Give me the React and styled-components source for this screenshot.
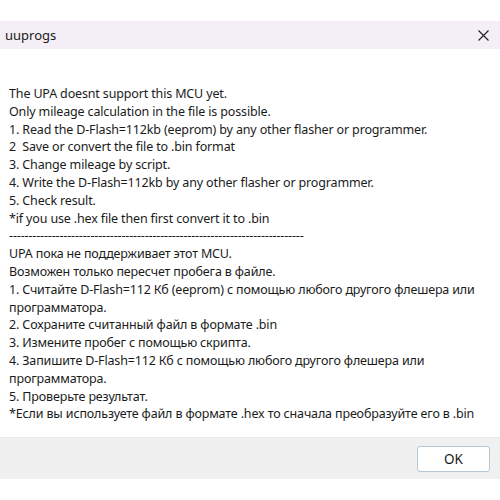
import React from 'react';
import styled, { createGlobalStyle } from 'styled-components';

const GlobalStyle = createGlobalStyle`
  html, body {
    margin: 0;
    padding: 0;
    background: #ffffff;
  }
  body {
    font-family: "Noto Sans", "Open Sans", sans-serif;
    color: #1b1b1b;
  }
`

const englishLines = [
  'The UPA doesnt support this MCU yet.',
  'Only mileage calculation in the file is possible.',
  '1. Read the D-Flash=112kb (eeprom) by any other flasher or programmer.',
  '2  Save or convert the file to .bin format',
  '3. Change mileage by script.',
  '4. Write the D-Flash=112kb by any other flasher or programmer.',
  '5. Check result.',
  '*if you use .hex file then first convert it to .bin',
]

const russianLines = [
  'UPA пока не поддерживает этот MCU.',
  'Возможен только пересчет пробега в файле.',
  '1. Считайте D-Flash=112 Кб (eeprom) с помощью любого другого флешера или',
  'программатора.',
  '2. Сохраните считанный файл в формате .bin',
  '3. Измените пробег с помощью скрипта.',
  '4. Запишите D-Flash=112 Кб с помощью любого другого флешера или',
  'программатора.',
  '5. Проверьте результат.',
  '*Если вы используете файл в формате .hex то сначала преобразуйте его в .bin',
]

const App = () => {
  return (
    <>
      <GlobalStyle />
      <Screen>
        <Dialog>
          <TitleBar>
            <Title>uuprogs</Title>
            <CloseButton aria-label="Close">
              <svg width="11" height="11" viewBox="0 0 11 11">
                <path d="M0.5 0.5 L10.5 10.5 M10.5 0.5 L0.5 10.5" stroke="#1f1f1f" strokeWidth="1.1" fill="none" />
              </svg>
            </CloseButton>
          </TitleBar>
          <Body>
            {englishLines.map((text, index) => <Line key={'en' + index}>{text}</Line>)}
            <Line>{'-'.repeat(76)}</Line>
            {russianLines.map((text, index) => <Line key={'ru' + index}>{text}</Line>)}
          </Body>
          <Footer>
            <OkButton>OK</OkButton>
          </Footer>
        </Dialog>
      </Screen>
    </>
  );
}

export default App;

const Screen = styled.div`
  width: 500px;
  height: 500px;
  padding-top: 21px;
  box-sizing: border-box;
  background: #ffffff;
`
const Dialog = styled.div`
  display: flex;
  flex-direction: column;
  width: 500px;
  height: 458px;
`
const TitleBar = styled.div`
  height: 28px;
  display: flex;
  align-items: center;
  justify-content: space-between;
  padding: 0 11px 0 5px;
  background: #f4eff7;
`
const Title = styled.div`
  font-size: 13px;
  color: #1a1a1a;
  padding-bottom: 1px;
`
const CloseButton = styled.div`
  display: flex;
  align-items: center;
  width: 11px;
  height: 11px;
`
const Body = styled.div`
  flex: 1;
  padding: 36px 0 0 9px;
  background: #ffffff;
`
const Line = styled.div`
  font-size: 12.5px;
  letter-spacing: -0.15px;
  line-height: 17.8px;
  white-space: pre;
`
const Footer = styled.div`
  height: 42px;
  display: flex;
  align-items: center;
  justify-content: flex-end;
  padding-right: 10px;
  background: #f0f0f0;
  border-top: 1px solid #e9e9e9;
  box-sizing: border-box;
`
const OkButton = styled.div`
  width: 73px;
  height: 26px;
  box-sizing: border-box;
  display: flex;
  align-items: center;
  justify-content: center;
  background: #ffffff;
  border: 1px solid #b5c8d8;
  border-radius: 3px;
  font-size: 13.5px;
  color: #1a1a1a;
`
